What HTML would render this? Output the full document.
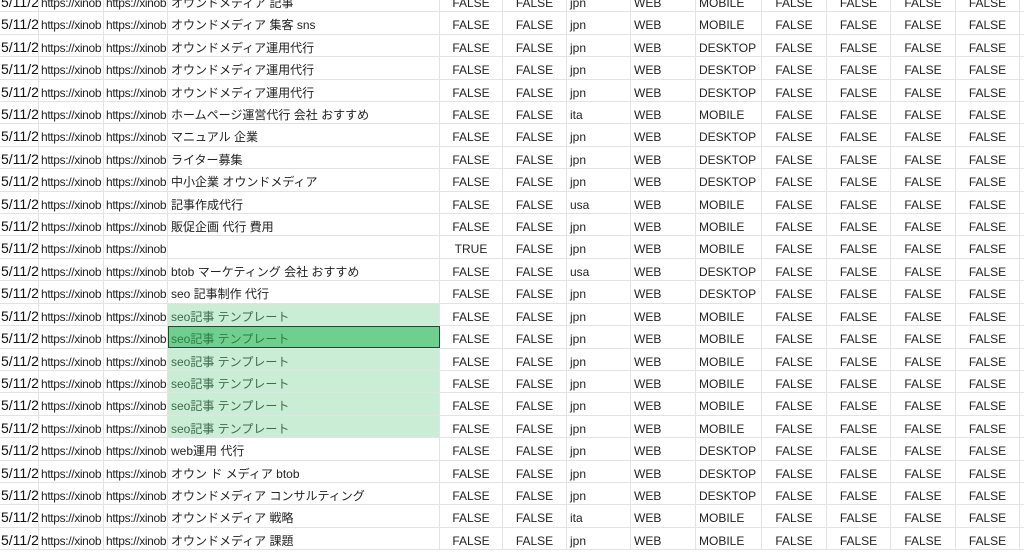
<!DOCTYPE html>
<html><head><meta charset="utf-8"><style>
*{margin:0;padding:0;box-sizing:border-box}
body{width:1024px;height:553px;overflow:hidden;background:#fff;font-family:"Liberation Sans","Noto Sans CJK JP",sans-serif;font-size:12px;color:#222;position:relative}
#g{position:absolute;left:0;top:-10px}
.r{display:flex;height:22.42px;border-bottom:1px solid #e3e3e3}
.r div{border-right:1px solid #e3e3e3;line-height:26px;white-space:nowrap;overflow:hidden;padding-left:3px;flex:none}
.r div:nth-child(1){width:39px;font-size:14px;color:#111;padding-left:1px;line-height:25px}
.r div:nth-child(2){width:65px;padding-left:2px;letter-spacing:-0.35px}
.r div:nth-child(3){width:64px;padding-left:2px;letter-spacing:-0.35px}
.r div:nth-child(4){width:272px}
.r div:nth-child(5){width:63px;text-align:center;padding:0}
.r div:nth-child(6){width:64px;text-align:center;padding:0}
.r div:nth-child(7){width:64px}
.r div:nth-child(8){width:65px}
.r div:nth-child(9){width:66px}
.r div:nth-child(10),.r div:nth-child(11),.r div:nth-child(12),.r div:nth-child(13){text-align:center;padding:0}
.r div:nth-child(10){width:65px}
.r div:nth-child(11){width:64px}
.r div:nth-child(12){width:65px}
.r div:nth-child(13){width:64px}
.r div:nth-child(14){width:10px;border:none}
.s div:nth-child(4){background:#c9edd5;color:#3d6b4b}
.a div:nth-child(4){background:#6fcf8f;color:#2f7a48;outline:1.5px solid #1f4a2c;outline-offset:-1px}
</style></head><body><div id="g">
<div class="r"><div>5/11/2</div><div>https://xinob</div><div>https://xinob</div><div>オウンドメディア 記事</div><div>FALSE</div><div>FALSE</div><div>jpn</div><div>WEB</div><div>MOBILE</div><div>FALSE</div><div>FALSE</div><div>FALSE</div><div>FALSE</div><div></div></div>
<div class="r"><div>5/11/2</div><div>https://xinob</div><div>https://xinob</div><div>オウンドメディア 集客 sns</div><div>FALSE</div><div>FALSE</div><div>jpn</div><div>WEB</div><div>MOBILE</div><div>FALSE</div><div>FALSE</div><div>FALSE</div><div>FALSE</div><div></div></div>
<div class="r"><div>5/11/2</div><div>https://xinob</div><div>https://xinob</div><div>オウンドメディア運用代行</div><div>FALSE</div><div>FALSE</div><div>jpn</div><div>WEB</div><div>DESKTOP</div><div>FALSE</div><div>FALSE</div><div>FALSE</div><div>FALSE</div><div></div></div>
<div class="r"><div>5/11/2</div><div>https://xinob</div><div>https://xinob</div><div>オウンドメディア運用代行</div><div>FALSE</div><div>FALSE</div><div>jpn</div><div>WEB</div><div>DESKTOP</div><div>FALSE</div><div>FALSE</div><div>FALSE</div><div>FALSE</div><div></div></div>
<div class="r"><div>5/11/2</div><div>https://xinob</div><div>https://xinob</div><div>オウンドメディア運用代行</div><div>FALSE</div><div>FALSE</div><div>jpn</div><div>WEB</div><div>DESKTOP</div><div>FALSE</div><div>FALSE</div><div>FALSE</div><div>FALSE</div><div></div></div>
<div class="r"><div>5/11/2</div><div>https://xinob</div><div>https://xinob</div><div>ホームページ運営代行 会社 おすすめ</div><div>FALSE</div><div>FALSE</div><div>ita</div><div>WEB</div><div>MOBILE</div><div>FALSE</div><div>FALSE</div><div>FALSE</div><div>FALSE</div><div></div></div>
<div class="r"><div>5/11/2</div><div>https://xinob</div><div>https://xinob</div><div>マニュアル 企業</div><div>FALSE</div><div>FALSE</div><div>jpn</div><div>WEB</div><div>DESKTOP</div><div>FALSE</div><div>FALSE</div><div>FALSE</div><div>FALSE</div><div></div></div>
<div class="r"><div>5/11/2</div><div>https://xinob</div><div>https://xinob</div><div>ライター募集</div><div>FALSE</div><div>FALSE</div><div>jpn</div><div>WEB</div><div>DESKTOP</div><div>FALSE</div><div>FALSE</div><div>FALSE</div><div>FALSE</div><div></div></div>
<div class="r"><div>5/11/2</div><div>https://xinob</div><div>https://xinob</div><div>中小企業 オウンドメディア</div><div>FALSE</div><div>FALSE</div><div>jpn</div><div>WEB</div><div>DESKTOP</div><div>FALSE</div><div>FALSE</div><div>FALSE</div><div>FALSE</div><div></div></div>
<div class="r"><div>5/11/2</div><div>https://xinob</div><div>https://xinob</div><div>記事作成代行</div><div>FALSE</div><div>FALSE</div><div>usa</div><div>WEB</div><div>MOBILE</div><div>FALSE</div><div>FALSE</div><div>FALSE</div><div>FALSE</div><div></div></div>
<div class="r"><div>5/11/2</div><div>https://xinob</div><div>https://xinob</div><div>販促企画 代行 費用</div><div>FALSE</div><div>FALSE</div><div>jpn</div><div>WEB</div><div>MOBILE</div><div>FALSE</div><div>FALSE</div><div>FALSE</div><div>FALSE</div><div></div></div>
<div class="r"><div>5/11/2</div><div>https://xinob</div><div>https://xinob</div><div></div><div>TRUE</div><div>FALSE</div><div>jpn</div><div>WEB</div><div>MOBILE</div><div>FALSE</div><div>FALSE</div><div>FALSE</div><div>FALSE</div><div></div></div>
<div class="r"><div>5/11/2</div><div>https://xinob</div><div>https://xinob</div><div>btob マーケティング 会社 おすすめ</div><div>FALSE</div><div>FALSE</div><div>usa</div><div>WEB</div><div>DESKTOP</div><div>FALSE</div><div>FALSE</div><div>FALSE</div><div>FALSE</div><div></div></div>
<div class="r"><div>5/11/2</div><div>https://xinob</div><div>https://xinob</div><div>seo 記事制作 代行</div><div>FALSE</div><div>FALSE</div><div>jpn</div><div>WEB</div><div>DESKTOP</div><div>FALSE</div><div>FALSE</div><div>FALSE</div><div>FALSE</div><div></div></div>
<div class="r s"><div>5/11/2</div><div>https://xinob</div><div>https://xinob</div><div>seo記事 テンプレート</div><div>FALSE</div><div>FALSE</div><div>jpn</div><div>WEB</div><div>MOBILE</div><div>FALSE</div><div>FALSE</div><div>FALSE</div><div>FALSE</div><div></div></div>
<div class="r s a"><div>5/11/2</div><div>https://xinob</div><div>https://xinob</div><div>seo記事 テンプレート</div><div>FALSE</div><div>FALSE</div><div>jpn</div><div>WEB</div><div>MOBILE</div><div>FALSE</div><div>FALSE</div><div>FALSE</div><div>FALSE</div><div></div></div>
<div class="r s"><div>5/11/2</div><div>https://xinob</div><div>https://xinob</div><div>seo記事 テンプレート</div><div>FALSE</div><div>FALSE</div><div>jpn</div><div>WEB</div><div>MOBILE</div><div>FALSE</div><div>FALSE</div><div>FALSE</div><div>FALSE</div><div></div></div>
<div class="r s"><div>5/11/2</div><div>https://xinob</div><div>https://xinob</div><div>seo記事 テンプレート</div><div>FALSE</div><div>FALSE</div><div>jpn</div><div>WEB</div><div>MOBILE</div><div>FALSE</div><div>FALSE</div><div>FALSE</div><div>FALSE</div><div></div></div>
<div class="r s"><div>5/11/2</div><div>https://xinob</div><div>https://xinob</div><div>seo記事 テンプレート</div><div>FALSE</div><div>FALSE</div><div>jpn</div><div>WEB</div><div>MOBILE</div><div>FALSE</div><div>FALSE</div><div>FALSE</div><div>FALSE</div><div></div></div>
<div class="r s"><div>5/11/2</div><div>https://xinob</div><div>https://xinob</div><div>seo記事 テンプレート</div><div>FALSE</div><div>FALSE</div><div>jpn</div><div>WEB</div><div>MOBILE</div><div>FALSE</div><div>FALSE</div><div>FALSE</div><div>FALSE</div><div></div></div>
<div class="r"><div>5/11/2</div><div>https://xinob</div><div>https://xinob</div><div>web運用 代行</div><div>FALSE</div><div>FALSE</div><div>jpn</div><div>WEB</div><div>DESKTOP</div><div>FALSE</div><div>FALSE</div><div>FALSE</div><div>FALSE</div><div></div></div>
<div class="r"><div>5/11/2</div><div>https://xinob</div><div>https://xinob</div><div>オウン ド メディア btob</div><div>FALSE</div><div>FALSE</div><div>jpn</div><div>WEB</div><div>DESKTOP</div><div>FALSE</div><div>FALSE</div><div>FALSE</div><div>FALSE</div><div></div></div>
<div class="r"><div>5/11/2</div><div>https://xinob</div><div>https://xinob</div><div>オウンドメディア コンサルティング</div><div>FALSE</div><div>FALSE</div><div>jpn</div><div>WEB</div><div>DESKTOP</div><div>FALSE</div><div>FALSE</div><div>FALSE</div><div>FALSE</div><div></div></div>
<div class="r"><div>5/11/2</div><div>https://xinob</div><div>https://xinob</div><div>オウンドメディア 戦略</div><div>FALSE</div><div>FALSE</div><div>ita</div><div>WEB</div><div>MOBILE</div><div>FALSE</div><div>FALSE</div><div>FALSE</div><div>FALSE</div><div></div></div>
<div class="r"><div>5/11/2</div><div>https://xinob</div><div>https://xinob</div><div>オウンドメディア 課題</div><div>FALSE</div><div>FALSE</div><div>jpn</div><div>WEB</div><div>MOBILE</div><div>FALSE</div><div>FALSE</div><div>FALSE</div><div>FALSE</div><div></div></div>
</div></body></html>
